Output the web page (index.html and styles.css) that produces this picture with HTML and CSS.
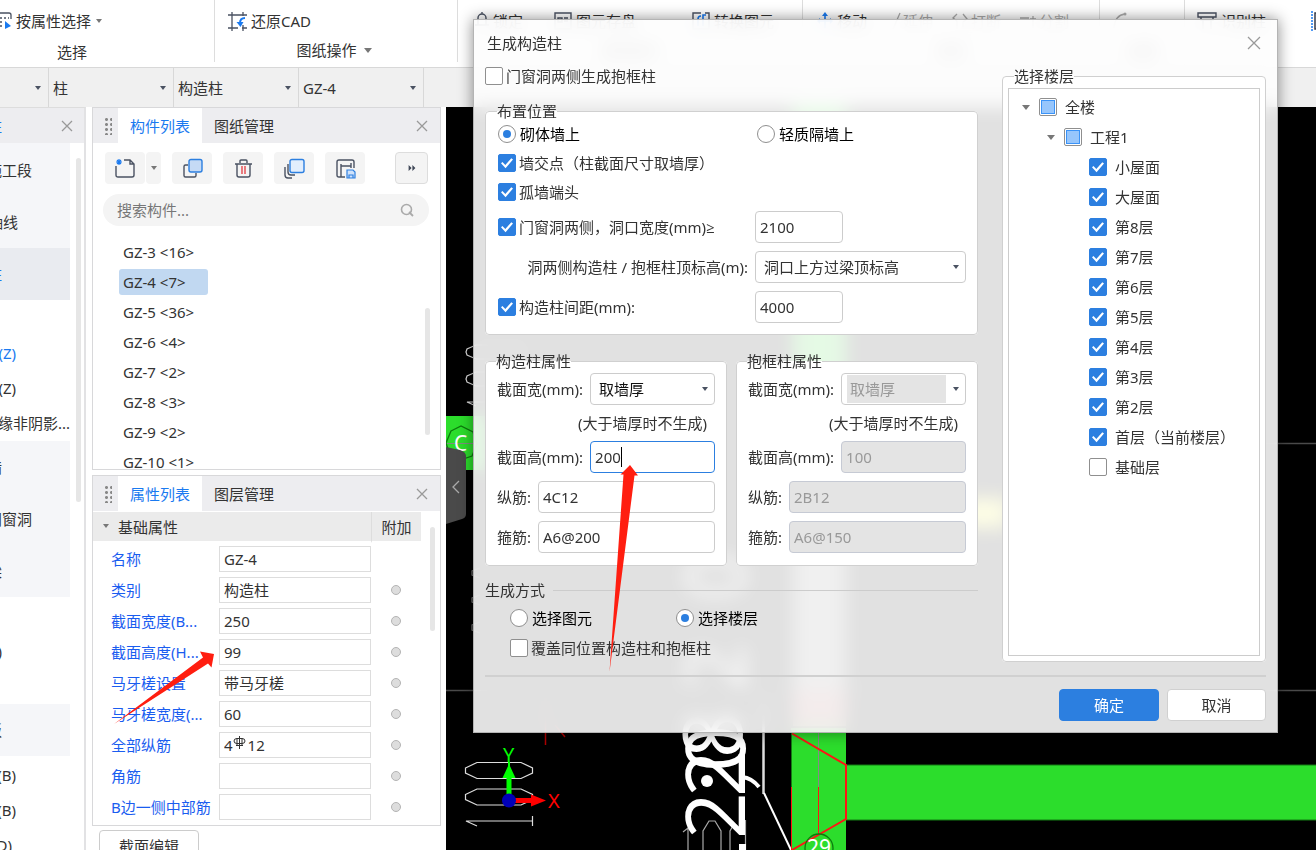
FILE: index.html
```html
<!DOCTYPE html>
<html lang="zh-CN">
<head>
<meta charset="utf-8">
<title>生成构造柱</title>
<link rel="stylesheet" href="styles.css">
</head>
<body>
<header class="ribbon">
  <section class="group g-select">
    <div class="tools">
      <button class="tool"><svg width="13" height="20" viewBox="0 0 13 20"><path d="M0 2h9q2 0 2 2v4M0 7h2M4 7h2M8 7h1M0 11h2M0 15h2" fill="none" stroke="#4a5262" stroke-width="1.3"/><path d="M5 10v8l6-3z" fill="#1a7af0"/></svg>按属性选择<i class="caret"></i></button>
    </div>
    <div class="group-label">选择</div>
  </section>
  <section class="group g-draw">
    <div class="tools">
      <button class="tool"><svg width="19" height="19" viewBox="0 0 19 19"><path d="M0 3h19M4 0v19M0 16h10M15 0v4M14 16h5M15 13v6" fill="none" stroke="#4a5262" stroke-width="1.3"/><path d="M17 6q-5 0-5 5" fill="none" stroke="#1a7af0" stroke-width="2"/><path d="M8.500 10h7l-3 5z" fill="#1a7af0"/></svg>还原CAD</button>
    </div>
    <div class="group-label">图纸操作<i class="caret big"></i></div>
  </section>
  <section class="group g-common">
    <div class="tools">
      <button class="tool"><svg width="14" height="18" viewBox="0 0 14 18"><path d="M0 13h14M3 13V6a4 4 0 0 1 8 0v7M7 0v2" fill="none" stroke="#4a5262" stroke-width="1.4"/></svg>锁定</button>
      <button class="tool"><svg width="18" height="18" viewBox="0 0 18 18"><path d="M1 1h16v16H1zM4 6h4v4H4zM10 6h4M10 9h4" fill="none" stroke="#4a5262" stroke-width="1.4"/></svg>图元存盘</button>
      <button class="tool"><svg width="18" height="18" viewBox="0 0 18 18"><path d="M9 1H1v16h16V1h-4" fill="none" stroke="#4a5262" stroke-width="1.4"/><path d="M6 14V7q0-3 3-3M11 14V3h3" fill="none" stroke="#1a7af0" stroke-width="1.6"/></svg>转换图元</button>
    </div>
    <div class="group-label">通用操作</div>
  </section>
  <section class="group g-modify">
    <div class="tools">
      <button class="tool"><svg width="16" height="18" viewBox="0 0 16 18"><path d="M8 2v14M1 9h14" fill="none" stroke="#1a7af0" stroke-width="1.6"/><path d="M8 0l3 4H5zM0 9l3-3v6zM16 9l-3-3v6z" fill="#1a7af0"/></svg>移动</button>
      <button class="tool" disabled><svg width="12" height="18" viewBox="0 0 12 18"><path d="M9 1L2 17" stroke="#aaa" stroke-width="1.3"/></svg>延伸</button>
      <button class="tool" disabled><svg width="20" height="18" viewBox="0 0 20 18"><path d="M6 2L2 6l4 3v8M12 2l4 5-4 3v7" fill="none" stroke="#aaa" stroke-width="1.3"/></svg>打断</button>
      <button class="tool" disabled><svg width="20" height="18" viewBox="0 0 20 18"><path d="M1 6h9M14 4v12M11 7h6" fill="none" stroke="#aaa" stroke-width="1.3"/></svg>分割</button>
    </div>
    <div class="group-label">修改</div>
  </section>
  <section class="group g-arc">
    <div class="tools">
      <button class="tool" disabled aria-label="绘制圆弧"><svg width="18" height="18" viewBox="0 0 18 18"><path d="M2 16Q3 3 13 2" fill="none" stroke="#aaa" stroke-width="1.4"/><circle cx="13" cy="2" r="1.500" fill="#aaa"/></svg></button>
    </div>
    <div class="group-label">绘图</div>
  </section>
  <section class="group g-identify">
    <div class="tools">
      <button class="tool"><svg width="20" height="18" viewBox="0 0 20 18"><path d="M1 1h18v4H1zM4 5v3h12V5M6 8v9M14 8v9" fill="none" stroke="#4a5262" stroke-width="1.400"/></svg>识别柱</button>
      <button class="tool" aria-label="校核"><svg width="18" height="20" viewBox="0 0 18 20"><path d="M1 0v20" stroke="#1a7af0" stroke-width="1.500" stroke-dasharray="2 1"/><path d="M12 2H4v16h8" fill="none" stroke="#333a4a" stroke-width="1.500"/></svg></button>
    </div>
  </section>
</header>

<nav class="selectors" aria-label="构件选择">
  <div class="pick first"><select aria-label="楼层"><option></option></select></div>
  <div class="pick"><select aria-label="构件大类"><option>柱</option></select></div>
  <div class="pick"><select aria-label="构件类型"><option>构造柱</option></select></div>
  <div class="pick"><select aria-label="构件名称"><option>GZ-4</option></select></div>
</nav>

<main class="work">
  <aside class="modules">
    <div class="modules-head"><span class="cut w2 blue">柱</span><button class="x" aria-label="关闭"><svg width="12" height="12" viewBox="0 0 12 12"><path d="M1 1l10 10M11 1L1 11"/></svg></button></div>
    <div class="modules-body">
      <ul class="heads">
        <li><span class="cut w32">施工段</span></li>
        <li><span class="cut w18">轴线</span></li>
        <li class="current"><span class="cut w2 blue">柱</span></li>
      </ul>
      <ul class="subs">
        <li></li>
        <li><span class="cut w16 blue">柱(Z)</span></li>
        <li><span class="cut w16">构造柱(Z)</span></li>
        <li><span class="cut w70">约束边缘非阴影...</span></li>
      </ul>
      <ul class="heads">
        <li><span class="cut w2">墙</span></li>
        <li><span class="cut w32">门窗洞</span></li>
        <li><span class="cut w2">梁</span></li>
      </ul>
      <ul class="subs">
        <li></li>
        <li><span class="cut w2">(L)</span></li>
        <li></li>
      </ul>
      <ul class="heads"><li><span class="cut w2">板</span></li></ul>
      <ul class="subs">
        <li><span class="cut w16">现浇板(B)</span></li>
        <li><span class="cut w16">螺旋板(B)</span></li>
        <li><span class="cut w12">板洞(D)</span></li>
      </ul>
      <i class="bar"></i>
    </div>
  </aside>

  <div class="docks">
    <section class="dock dock-list">
      <div class="tabs"><i class="grip"></i><button class="tab active">构件列表</button><button class="tab">图纸管理</button><button class="x" aria-label="关闭"><svg width="12" height="12" viewBox="0 0 12 12"><path d="M1 1l10 10M11 1L1 11"/></svg></button></div>
      <div class="actions">
        <div class="split">
          <button class="act" aria-label="新建"><svg width="21" height="21" viewBox="0 0 21 21"><path d="M9 2h6l4 4v11q0 2-2 2H3q-2 0-2-2V8M15 2v4h4" fill="none" stroke="#4a5262" stroke-width="1.400"/><path d="M1 4h6M4 1v6M2 2l4 4M6 2L2 6" stroke="#1a7af0" stroke-width="1.200"/></svg></button>
          <button class="act narrow" aria-label="新建选项"><i class="caret"></i></button>
        </div>
        <button class="act" aria-label="复制"><svg width="21" height="21" viewBox="0 0 21 21"><path d="M6 7H3.500Q2 7 2 8.500v9Q2 19 3.500 19h9q1.500 0 1.500-1.500V15" fill="none" stroke="#4a5262" stroke-width="1.400"/><rect x="7" y="1.500" width="13" height="12.500" rx="2" fill="#c5daf5" stroke="#2c7fe0" stroke-width="1.400"/></svg></button>
        <button class="act" aria-label="删除"><svg width="21" height="21" viewBox="0 0 21 21"><path d="M2 6h17M7 5V3q0-1 1-1h5q1 0 1 1v2M4 6v11q0 2 2 2h9q2 0 2-2V6" fill="none" stroke="#4a5262" stroke-width="1.400"/><path d="M9 8v8M12 8v8" stroke="#e5484d" stroke-width="1.400"/></svg></button>
        <button class="act" aria-label="层间复制"><svg width="21" height="21" viewBox="0 0 21 21"><path d="M1 9v8q0 3 3 3h4M4 6v8q0 3 3 3h4" fill="none" stroke="#4a5262" stroke-width="1.400"/><rect x="6" y="1.500" width="14" height="13" rx="2" fill="#e2eefd" stroke="#2c7fe0" stroke-width="1.400"/></svg></button>
        <button class="act" aria-label="存档"><svg width="21" height="21" viewBox="0 0 21 21"><path d="M10 19H4q-2 0-2-2V4q0-2 2-2h13q2 0 2 2v6M6 6v13M6 8h10M16 5v5" fill="none" stroke="#4a5262" stroke-width="1.400"/><path d="M12 12h6l2 2v6h-8zM14 20v-3h4v3" fill="#cfe2fb" stroke="#2c7fe0" stroke-width="1.200"/></svg></button>
        <button class="act more" aria-label="更多"><svg width="10" height="6" viewBox="0 0 11 8"><path d="M1 0l4 4-4 4zM6 0l4 4-4 4z" fill="#3f4757"/></svg></button>
      </div>
      <label class="search"><input type="text" placeholder="搜索构件..." aria-label="搜索构件"><svg width="14" height="14" viewBox="0 0 14 14"><circle cx="6.500" cy="6.500" r="5" fill="none" stroke="#aaa" stroke-width="1.600"/><path d="M9 9l4 4" stroke="#aaa" stroke-width="1.800"/></svg></label>
      <ul class="items">
        <li><span>GZ-3 &lt;16&gt;</span></li>
        <li><span class="picked">GZ-4 &lt;7&gt;</span></li>
        <li><span>GZ-5 &lt;36&gt;</span></li>
        <li><span>GZ-6 &lt;4&gt;</span></li>
        <li><span>GZ-7 &lt;2&gt;</span></li>
        <li><span>GZ-8 &lt;3&gt;</span></li>
        <li><span>GZ-9 &lt;2&gt;</span></li>
        <li><span>GZ-10 &lt;1&gt;</span></li>
      </ul>
      <i class="bar"></i>
    </section>

    <section class="dock dock-props">
      <div class="tabs"><i class="grip"></i><button class="tab active">属性列表</button><button class="tab">图层管理</button><button class="x" aria-label="关闭"><svg width="12" height="12" viewBox="0 0 12 12"><path d="M1 1l10 10M11 1L1 11"/></svg></button></div>
      <table class="props">
        <colgroup><col class="c-name"><col class="c-value"><col class="c-extra"></colgroup>
        <thead><tr><th colspan="2"><i class="caret"></i>基础属性</th><th class="extra">附加</th></tr></thead>
        <tbody>
          <tr><td><label for="p1">名称</label></td><td><input id="p1" type="text" value="GZ-4"></td><td></td></tr>
          <tr><td><label for="p2">类别</label></td><td><input id="p2" type="text" value="构造柱"></td><td><input type="checkbox" class="dot" aria-label="附加类别"></td></tr>
          <tr><td><label for="p3">截面宽度(B...</label></td><td><input id="p3" type="text" value="250"></td><td><input type="checkbox" class="dot" aria-label="附加截面宽度"></td></tr>
          <tr><td><label for="p4">截面高度(H...</label></td><td><input id="p4" type="text" value="99"></td><td><input type="checkbox" class="dot" aria-label="附加截面高度"></td></tr>
          <tr><td><label for="p5">马牙槎设置</label></td><td><input id="p5" type="text" value="带马牙槎"></td><td><input type="checkbox" class="dot" aria-label="附加马牙槎设置"></td></tr>
          <tr><td><label for="p6">马牙槎宽度(...</label></td><td><input id="p6" type="text" value="60"></td><td><input type="checkbox" class="dot" aria-label="附加马牙槎宽度"></td></tr>
          <tr><td><label for="p7">全部纵筋</label></td><td class="rebar"><input id="p7" type="text" value="4&emsp;12"><svg width="13" height="13" viewBox="0 0 13 13"><path d="M6.500 0v13M4 2v8M9 2v8M3 9.500h7M6 2.500H4Q1 2.500 1 5t3 2.500h5Q12 7.500 12 5T9 2.500z" fill="none" stroke="#333"/></svg></td><td><input type="checkbox" class="dot" aria-label="附加全部纵筋"></td></tr>
          <tr><td><label for="p8">角筋</label></td><td><input id="p8" type="text"></td><td><input type="checkbox" class="dot" aria-label="附加角筋"></td></tr>
          <tr><td><label for="p9">B边一侧中部筋</label></td><td><input id="p9" type="text"></td><td><input type="checkbox" class="dot" aria-label="附加B边一侧中部筋"></td></tr>
        </tbody>
      </table>
      <i class="bar"></i>
    </section>
    <button class="edit-section">截面编辑</button>
  </div>

  <div class="canvas">
    <svg viewBox="446 107 870 743" preserveAspectRatio="xMinYMin slice">
      <path d="M446 690.500H1316M1200 443.500H1316" stroke="#4a4a4a" stroke-width="1.500"/>
      <rect x="446" y="416" width="42" height="54" fill="#2cdd2c"/>
      <path d="M446 443.500h30" stroke="#7d8f7d"/>
      <path d="M451 431l10-5 12 6 4 12-5 12-12 4-10-5-4-12z" fill="none" stroke="#0c7a0c" stroke-width="1.300"/>
      <text x="454" y="451" class="cad c-mark">C</text>
      <g fill="none" stroke="#ddd" stroke-width="1.200">
        <path d="M530 345h-54l-9 4-1 3 1 3 9 4h54M530 372h-54l-9 4-1 3 1 3 9 4h54M530 402h-63l9 4"/>
        <path d="M480 568l-8 3v4l8 3M480 595l-8 3v4l8 3M480 622l-8 3v5l8 3" stroke="#777"/>
        <path d="M465.500 768l11.500-5.500h44l11.500 5.500v5L521 778.500h-44L465.500 773zM465.500 794.500l11.500-5.500h44l11.500 5.500v5L521 805h-44l-11.500-5.500zM477 826l-11-5h66M532.500 816v10"/>
        <path d="M688 850v-22l-5 4M703 850v-19l6-10h6l6 10v19M730 850v-19l4-7M745.500 820v30" stroke="#aaa"/>
      </g>
      <path d="M545.500 700v45M555 725l10 12" stroke="#b00000" stroke-width="1.500"/>
      <g class="cad dim">
        <text transform="translate(745 839) rotate(-90)">2</text>
        <text transform="translate(745 797) rotate(-90)">2</text>
        <text transform="translate(745 772) rotate(-90)">0</text>
        <text transform="translate(742 758) rotate(-90)">8</text>
        <text transform="translate(745 690) rotate(-90)">2</text>
        <text transform="translate(745 600) rotate(-90)">0</text>
      </g>
      <circle cx="707" cy="781" r="6" fill="#fff"/>
      <path d="M739 844h7v6h-7z" fill="#fff"/>
      <path d="M742 777q10 1 17 10" fill="none" stroke="#fff" stroke-width="4"/>
      <path d="M763.500 700v94" stroke="#ddd" stroke-width="2.500"/><path d="M764 793l27 57" stroke="#fff" stroke-width="2"/>
      <rect x="793" y="107" width="53" height="403" fill="#2cdd2c"/>
      <rect x="793" y="520" width="53" height="170" fill="#888"/>
      <rect x="793" y="690" width="53" height="36" fill="#a66"/>
      <rect x="960" y="498" width="48" height="30" fill="#ffff30"/>
      <path d="M791 728h55v122h-55z" fill="#2cdd2c"/>
      <path d="M846 765h480v55H846z" fill="#2cdd2c" stroke="#137a13"/>
      <path d="M791.500 730v120" stroke="#137a13"/>
      <path d="M818.500 730v58" stroke="#888"/>
      <path d="M818.500 787v48M791.500 787v63" stroke="#ff1414"/>
      <path d="M792 733.500L846 765v54l-54 31" fill="none" stroke="#ff1414" stroke-width="2"/>
      <circle cx="819" cy="848" r="14" fill="none" stroke="#0c7a0c" stroke-width="1.300"/>
      <text x="807" y="855" class="cad c-mark">29</text>
      <path d="M509 800v-38" stroke="#0f0" stroke-width="2"/><path d="M509 800v-24" stroke="#0f0" stroke-width="5"/><path d="M502.500 778h13l-6.500-14z" fill="#0f0"/>
      <path d="M510 800.500h22" stroke="#f00" stroke-width="5"/><path d="M531 794.500v12l15-6z" fill="#f00"/>
      <circle cx="509" cy="800.500" r="7" fill="#0000b8"/>
      <text x="503" y="762" class="cad axis" fill="#0f0">Y</text>
      <text x="548" y="808" class="cad axis" fill="#f00">X</text>
      <path d="M446 447l14 3q6 2 6 6v58q0 4-4 5l-16 5z" fill="#4a4a4a"/>
      <path d="M459 481l-6 6 6 6" fill="none" stroke="#aaa" stroke-width="1.300"/>
    </svg>
  </div>
</main>

<form class="dialog" role="dialog" aria-labelledby="dlg-title">
  <div class="title"><span id="dlg-title">生成构造柱</span><button type="button" class="x large" aria-label="关闭"><svg width="14" height="14" viewBox="0 0 14 14"><path d="M1 1l12 12M13 1L1 13"/></svg></button></div>
  <div class="content">
    <div class="left">
      <label class="opt lone"><input type="checkbox">门窗洞两侧生成抱框柱</label>
      <fieldset class="box place">
        <legend>布置位置</legend>
        <div class="two"><label class="opt strong"><input type="radio" name="wall" checked>砌体墙上</label><label class="opt strong"><input type="radio" name="wall">轻质隔墙上</label></div>
        <label class="opt"><input type="checkbox" checked>墙交点（柱截面尺寸取墙厚）</label>
        <label class="opt"><input type="checkbox" checked>孤墙端头</label>
        <div class="fields">
          <label class="opt"><input type="checkbox" checked>门窗洞两侧，洞口宽度(mm)≥</label><input type="text" class="field short" value="2100" aria-label="洞口宽度">
          <label class="sub-label" for="top">洞两侧构造柱 / 抱框柱顶标高(m):</label><span class="pick"><select id="top" class="field"><option>洞口上方过梁顶标高</option></select></span>
          <label class="opt"><input type="checkbox" checked>构造柱间距(mm):</label><input type="text" class="field short" value="4000" aria-label="构造柱间距">
        </div>
      </fieldset>
      <div class="pair">
        <fieldset class="box spec">
          <legend>构造柱属性</legend>
          <div class="row"><label for="a1">截面宽(mm):</label><span class="pick"><select id="a1" class="field dark"><option>取墙厚</option></select></span></div>
          <p>(大于墙厚时不生成)</p>
          <div class="row"><label for="a2">截面高(mm):</label><span class="editing"><input id="a2" type="text" class="field focus" value="200"><i class="cursor"></i></span></div>
          <div class="row"><label for="a3">纵筋:</label><input id="a3" type="text" class="field" value="4C12"></div>
          <div class="row"><label for="a4">箍筋:</label><input id="a4" type="text" class="field" value="A6@200"></div>
        </fieldset>
        <fieldset class="box spec">
          <legend>抱框柱属性</legend>
          <div class="row"><label for="b1">截面宽(mm):</label><span class="pick off"><select id="b1" class="field" disabled><option>取墙厚</option></select></span></div>
          <p>(大于墙厚时不生成)</p>
          <div class="row"><label for="b2">截面高(mm):</label><input id="b2" type="text" class="field" value="100" disabled></div>
          <div class="row"><label for="b3">纵筋:</label><input id="b3" type="text" class="field" value="2B12" disabled></div>
          <div class="row"><label for="b4">箍筋:</label><input id="b4" type="text" class="field" value="A6@150" disabled></div>
        </fieldset>
      </div>
      <fieldset class="method">
        <legend>生成方式</legend>
        <div class="two"><label class="opt strong"><input type="radio" name="mode">选择图元</label><label class="opt strong"><input type="radio" name="mode" checked>选择楼层</label></div>
        <label class="opt"><input type="checkbox">覆盖同位置构造柱和抱框柱</label>
      </fieldset>
    </div>
    <fieldset class="box floors">
      <legend>选择楼层</legend>
      <div class="tree">
        <div class="node n0"><i class="caret big"></i><label class="opt"><input type="checkbox" class="partial">全楼</label></div>
        <div class="node n1"><i class="caret big"></i><label class="opt"><input type="checkbox" class="partial">工程1</label></div>
        <div class="node n2"><label class="opt"><input type="checkbox" checked>小屋面</label></div>
        <div class="node n2"><label class="opt"><input type="checkbox" checked>大屋面</label></div>
        <div class="node n2"><label class="opt"><input type="checkbox" checked>第8层</label></div>
        <div class="node n2"><label class="opt"><input type="checkbox" checked>第7层</label></div>
        <div class="node n2"><label class="opt"><input type="checkbox" checked>第6层</label></div>
        <div class="node n2"><label class="opt"><input type="checkbox" checked>第5层</label></div>
        <div class="node n2"><label class="opt"><input type="checkbox" checked>第4层</label></div>
        <div class="node n2"><label class="opt"><input type="checkbox" checked>第3层</label></div>
        <div class="node n2"><label class="opt"><input type="checkbox" checked>第2层</label></div>
        <div class="node n2"><label class="opt"><input type="checkbox" checked>首层（当前楼层）</label></div>
        <div class="node n2"><label class="opt"><input type="checkbox">基础层</label></div>
      </div>
    </fieldset>
  </div>
  <div class="foot"><button type="button" class="btn primary">确定</button><button type="button" class="btn">取消</button></div>
</form>

<svg class="marks" width="660" height="740" viewBox="0 0 660 740" aria-hidden="true"><g fill="#ff1e10"><path d="M114 724L203 657.500 200 651.500 214 654 211.500 667.500 208 663.500z"/><path d="M609.500 672L623.500 474.500H620.500L630 465 638 475.500H634.500z"/></g></svg>
</body>
</html>
```
FILE: styles.css
```css
* { box-sizing: border-box; }
body {
  margin: 0;
  height: 100vh;
  display: flex;
  flex-direction: column;
  position: relative;
  overflow: hidden;
  background: #fff;
  color: #333;
  font: 15px/20px "Noto Sans", "Open Sans", "Noto Sans CJK SC", sans-serif;
}
button, input, select { font: inherit; color: inherit; margin: 0; }
button { border: 0; padding: 0; background: none; display: flex; align-items: center; justify-content: center; white-space: nowrap; }
select { appearance: none; border: 0; background: none; border-radius: 0; opacity: 1; }
ul { list-style: none; margin: 0; padding: 0; }
svg { flex: none; display: block; }
label { white-space: nowrap; }

.caret { flex: none; display: inline-block; border: 3px solid transparent; border-top: 4px solid #777; border-bottom: 0; }
.caret.big { border-width: 4px; border-top-width: 5px; border-bottom: 0; }
.x svg path { stroke: #999; stroke-width: 1.3; }
.bar { position: absolute; width: 5px; border-radius: 3px; background: #e6e6e6; }

/* ribbon */
.ribbon { display: flex; height: 68px; flex: none; border-bottom: 1px solid #d8d8d8; overflow: hidden; }
.group { height: 62px; flex: none; border-right: 1px solid #ddd; padding-top: 10px; }
.tools { display: flex; height: 22px; align-items: center; }
.tool { gap: 4px; }
.tool:disabled { color: #aaa; }
.group-label { display: flex; align-items: center; justify-content: center; gap: 7px; height: 20px; margin-top: 8px; }
.g-select { width: 215px; }
.g-select .tool { gap: 3px; }
.g-select .caret { margin-left: 2px; }
.g-select .group-label { justify-content: flex-start; padding-left: 57px; margin-top: 10px; }
.g-draw { width: 243px; }
.g-draw .tools { padding-left: 13px; }
.g-draw .group-label { padding-right: 4px; }
.g-common { width: 345px; }
.g-common .tools { padding-left: 17px; gap: 31px; }
.g-common .tools .tool:last-child { margin-left: 25px; }
.g-modify { width: 297px; }
.g-modify .tools { padding-left: 14px; gap: 18px; }
.g-modify .tool + .tool { margin-left: 6px; }
.g-modify .tool + .tool + .tool { margin-left: 0; }
.g-modify .tool:disabled { gap: 0; }
.g-arc { width: 85px; }
.g-arc .tools { padding-left: 12px; }
.g-identify { border: 0; }
.g-identify .tools { padding-left: 12px; gap: 45px; }

/* selector bar */
.selectors { display: flex; flex: none; height: 39px; background: #f0f0f0; }
.pick { position: relative; display: flex; align-items: center; min-width: 0; }
.pick::after { content: ""; position: absolute; right: 7px; top: 50%; margin-top: -2px; border: 3px solid transparent; border-top: 4px solid #4a5262; border-bottom: 0; pointer-events: none; }
.pick select { width: 100%; }
.selectors .pick { width: 125px; border-right: 1px solid #d8d8d8; }
.selectors .pick.first { width: 49px; }
.selectors select { height: 38px; padding: 0 4px; }

/* work area */
.work { flex: 1; display: flex; min-height: 0; }
.modules { width: 86px; flex: none; border-right: 2px solid #e2e2e4; border-top: 1px solid #ddd; }
.modules-head { height: 35px; background: #ededf0; display: flex; align-items: center; justify-content: space-between; padding-right: 11px; }
.modules-body { position: relative; padding-right: 14px; }
.modules-body .bar { right: 3px; top: 15px; height: 344px; }
.modules li { display: flex; align-items: center; }
.heads { background: #f5f6f9; }
.heads li { height: 52px; }
.heads:first-child { padding-top: 1px; }
.heads .current { background: #e9ebf0; }
.subs li { height: 35px; }
.subs + .heads, .heads + .subs ~ .subs { margin-top: 1px; }
.cut { display: flex; justify-content: flex-end; overflow: hidden; white-space: nowrap; }
.blue { color: #1a7af0; }
.w2 { width: 2px; }
.w12 { width: 12px; }
.w16 { width: 16px; }
.w18 { width: 18px; }
.w32 { width: 32px; }
.w70 { width: 70px; }

.docks { width: 349px; margin: 0 5px 0 6px; flex: none; display: flex; flex-direction: column; align-items: flex-start; }
.dock { width: 100%; flex: none; position: relative; border: 1px solid #d8d8da; overflow: hidden; }
.dock-list { height: 363px; margin-bottom: 5px; }
.dock-list .bar { right: 10px; top: 200px; height: 127px; }
.dock-props { height: 351px; margin-bottom: 4px; }
.dock-props .bar { right: 5px; top: 51px; height: 104px; }
.tabs { display: flex; height: 35px; background: #ededf0; padding-right: 12px; }
.grip { width: 8px; height: 18px; margin: 9px 6px 0 11px; background: radial-gradient(circle, #888 1px, transparent 2px) 0 0 / 5px 5px; }
.tab { padding: 0 12px; }
.tab.active { background: #fff; color: #1a7af0; }
.tabs .x { margin-left: auto; }
.actions { display: flex; gap: 11px; padding: 9px 12px 0; }
.split { display: flex; gap: 1px; }
.act { width: 40px; height: 32px; background: #f4f4f4; border-radius: 4px; }
.split .act { width: 40px; }
.split .act.narrow { width: 15px; }
.act.more { width: 33px; margin-left: auto; border: 1px solid #ddd; }
.search { display: flex; align-items: center; height: 32px; margin: 10px 11px 11px 10px; border-radius: 16px; background: #f4f4f4; padding: 0 15px 0 14px; }
.search input { flex: 1; min-width: 0; border: 0; padding: 0; background: none; }
.search input::placeholder { color: #777; opacity: 1; }
.items { padding: 0 0 0 26px; }
.items li { height: 30px; display: flex; align-items: center; }
.items span { padding: 3px 4px; min-width: 89px; border-radius: 3px; }
.items .picked { background: #c1d8f1; padding-right: 14px; }
.props { width: 328px; border-collapse: separate; border-spacing: 0; table-layout: fixed; margin-top: 1px; }
.c-name { width: 126px; }
.c-value { width: 152px; }
.c-extra { width: 50px; }
.props th { height: 31px; padding: 0 0 0 10px; text-align: left; font-weight: 400; background: #ebebeb; border-bottom: 2px solid #fff; }
.props th .caret { margin: 0 9px 5px 0; }
.props th.extra { padding: 0; text-align: center; border-left: 1px solid #ddd; }
.props td { height: 31px; padding: 0; text-align: center; }
.props td:first-child { text-align: left; padding-left: 18px; color: #1a5df0; white-space: nowrap; }
.props input[type=text] { display: block; width: 100%; height: 26px; padding: 0 4px; border: 1px solid #ddd; border-radius: 0; background: #fff; }
.rebar { position: relative; }
.rebar svg { position: absolute; left: 14px; top: 7px; }
.dot { appearance: none; width: 10px; height: 10px; border-radius: 50%; border: 1px solid #b4b4b4; background: #ddd; display: block; margin: 0 auto; }
.edit-section { width: 100px; height: 32px; flex: none; margin-left: 7px; border: 1px solid #ccc; border-radius: 4px; background: #fff; }

.canvas { flex: 1; min-width: 0; background: #000; overflow: hidden; }
.canvas svg { width: 100%; height: 100%; }
.cad { font-family: "Noto Sans", sans-serif; fill: #fff; }
.c-mark { font-size: 21px; }
.dim { font-family: "Open Sans", sans-serif; font-size: 82px; font-weight: 400; }
.axis { font-size: 20px; }
.axis[fill="#0f0"] { fill: #0f0; }
.axis[fill="#f00"] { fill: #f00; }

/* dialog */
.dialog {
  position: absolute;
  left: 473px;
  right: 38px;
  top: 19px;
  padding: 0 11px 11px;
  border: 1px solid #b4b4b4;
  background: rgba(253, 253, 253, .89);
  backdrop-filter: blur(9px);
  box-shadow: 0 0 14px rgba(0, 0, 0, .45);
}
.title { display: flex; align-items: center; justify-content: space-between; height: 46px; padding: 0 5px 0 2px; }
.content { display: grid; grid-template-columns: 1fr 264px; gap: 24px; }
.left { min-width: 0; }
fieldset { min-width: 0; margin: 0; padding: 0; border: 0; }
legend { padding: 0; white-space: nowrap; }
.box { border: 1px solid #d0d0d0; border-radius: 4px; background: #fff; }
.opt { display: flex; align-items: center; gap: 3px; height: 24px; }
.strong { color: #000; gap: 4px; }
.lone { height: 20px; margin-bottom: 15px; }
.opt input { appearance: none; flex: none; width: 18px; height: 18px; border: 1px solid #8f8f8f; border-radius: 2px; background: #fff; display: grid; place-items: center; }
.opt input[type=radio] { border-radius: 50%; }
.opt input[type=radio]:checked::before { content: ""; width: 8px; height: 8px; border-radius: 50%; background: #2c7fe0; }
.opt input[type=checkbox]:checked { border-color: #2c7fe0; background: #2c7fe0; }
.opt input[type=checkbox]:checked::before { content: ""; width: 12px; height: 12px; background: #fff; clip-path: polygon(0 52%, 12% 42%, 36% 66%, 86% 10%, 100% 20%, 38% 94%); }
.opt input.partial::before { content: ""; width: 12px; height: 12px; border: 1px solid #3b93f7; background: #97c6fc; }

.place { padding: 1px 11px 11px 12px; margin-bottom: 16px; display: block; }
.place > .opt { margin-top: 5px; }
.two { display: grid; grid-template-columns: 259px 1fr; }
.place legend, .spec legend { margin-left: -1px; }
.fields { display: grid; grid-template-columns: 250px 1fr; column-gap: 7px; row-gap: 8px; align-items: center; margin-top: 7px; }
.sub-label { text-align: right; }
.field { height: 32px; width: 100%; min-width: 0; border: 1px solid #ccc; border-radius: 4px; background: #fff; padding: 0 4px; }
select.field { padding: 0 8px; }
.field.short { width: 88px; }
.field:disabled { background: #e4e4e4; border-color: #c6cad4; color: #999; }
.field.dark { color: #111; }
.pair { display: grid; grid-template-columns: 1fr 1fr; gap: 9px; margin-bottom: 14px; }
.spec { padding: 2px 11px 12px; }
.spec .row { display: flex; align-items: center; gap: 7px; margin-bottom: 8px; }
.spec .row:last-child { margin-bottom: 0; }
.spec .row > .field, .spec .row > span { flex: 1; }
.spec p { margin: 0 8px 8px 0; text-align: right; white-space: nowrap; }
.editing { position: relative; display: flex; min-width: 0; }
.field.focus { border-color: #2c7fe0; }
.cursor { position: absolute; left: 31px; top: 6px; width: 1px; height: 20px; background: #000; }
.off select.field:disabled { background: linear-gradient(#e4e4e4, #e4e4e4) 5px 1px / calc(100% - 24px) 28px no-repeat #fff; border-color: #ccc; }
.method { border-top: 1px solid #ccc; padding: 6px 0 2px 25px; }
.method legend { margin-left: -25px; padding-right: 8px; }
.method .two { grid-template-columns: 166px 1fr; margin-bottom: 6px; }
.floors { display: flex; flex-direction: column; padding: 2px 5px 5px; }
.floors legend { margin-left: 6px; }
.tree { flex: 1; border: 1px solid #ccc; padding-top: 3px; background: #fff; }
.node { display: flex; align-items: center; height: 30px; gap: 9px; }
.node .opt { gap: 8px; }
.n0 { padding-left: 13px; }
.n1 { padding-left: 38px; }
.n2 { padding-left: 80px; }
.foot { display: flex; justify-content: flex-end; gap: 8px; margin-top: 13px; padding-top: 12px; border-top: 2px solid #d0d0d0; }
.btn { width: 99px; height: 32px; border: 1px solid #d0d0d0; border-radius: 4px; background: #fff; }
.btn.primary { width: 100px; border-color: #2c7fe0; background: #2c7fe0; color: #fff; }

.marks { position: absolute; left: 0; top: 0; pointer-events: none; }
```
